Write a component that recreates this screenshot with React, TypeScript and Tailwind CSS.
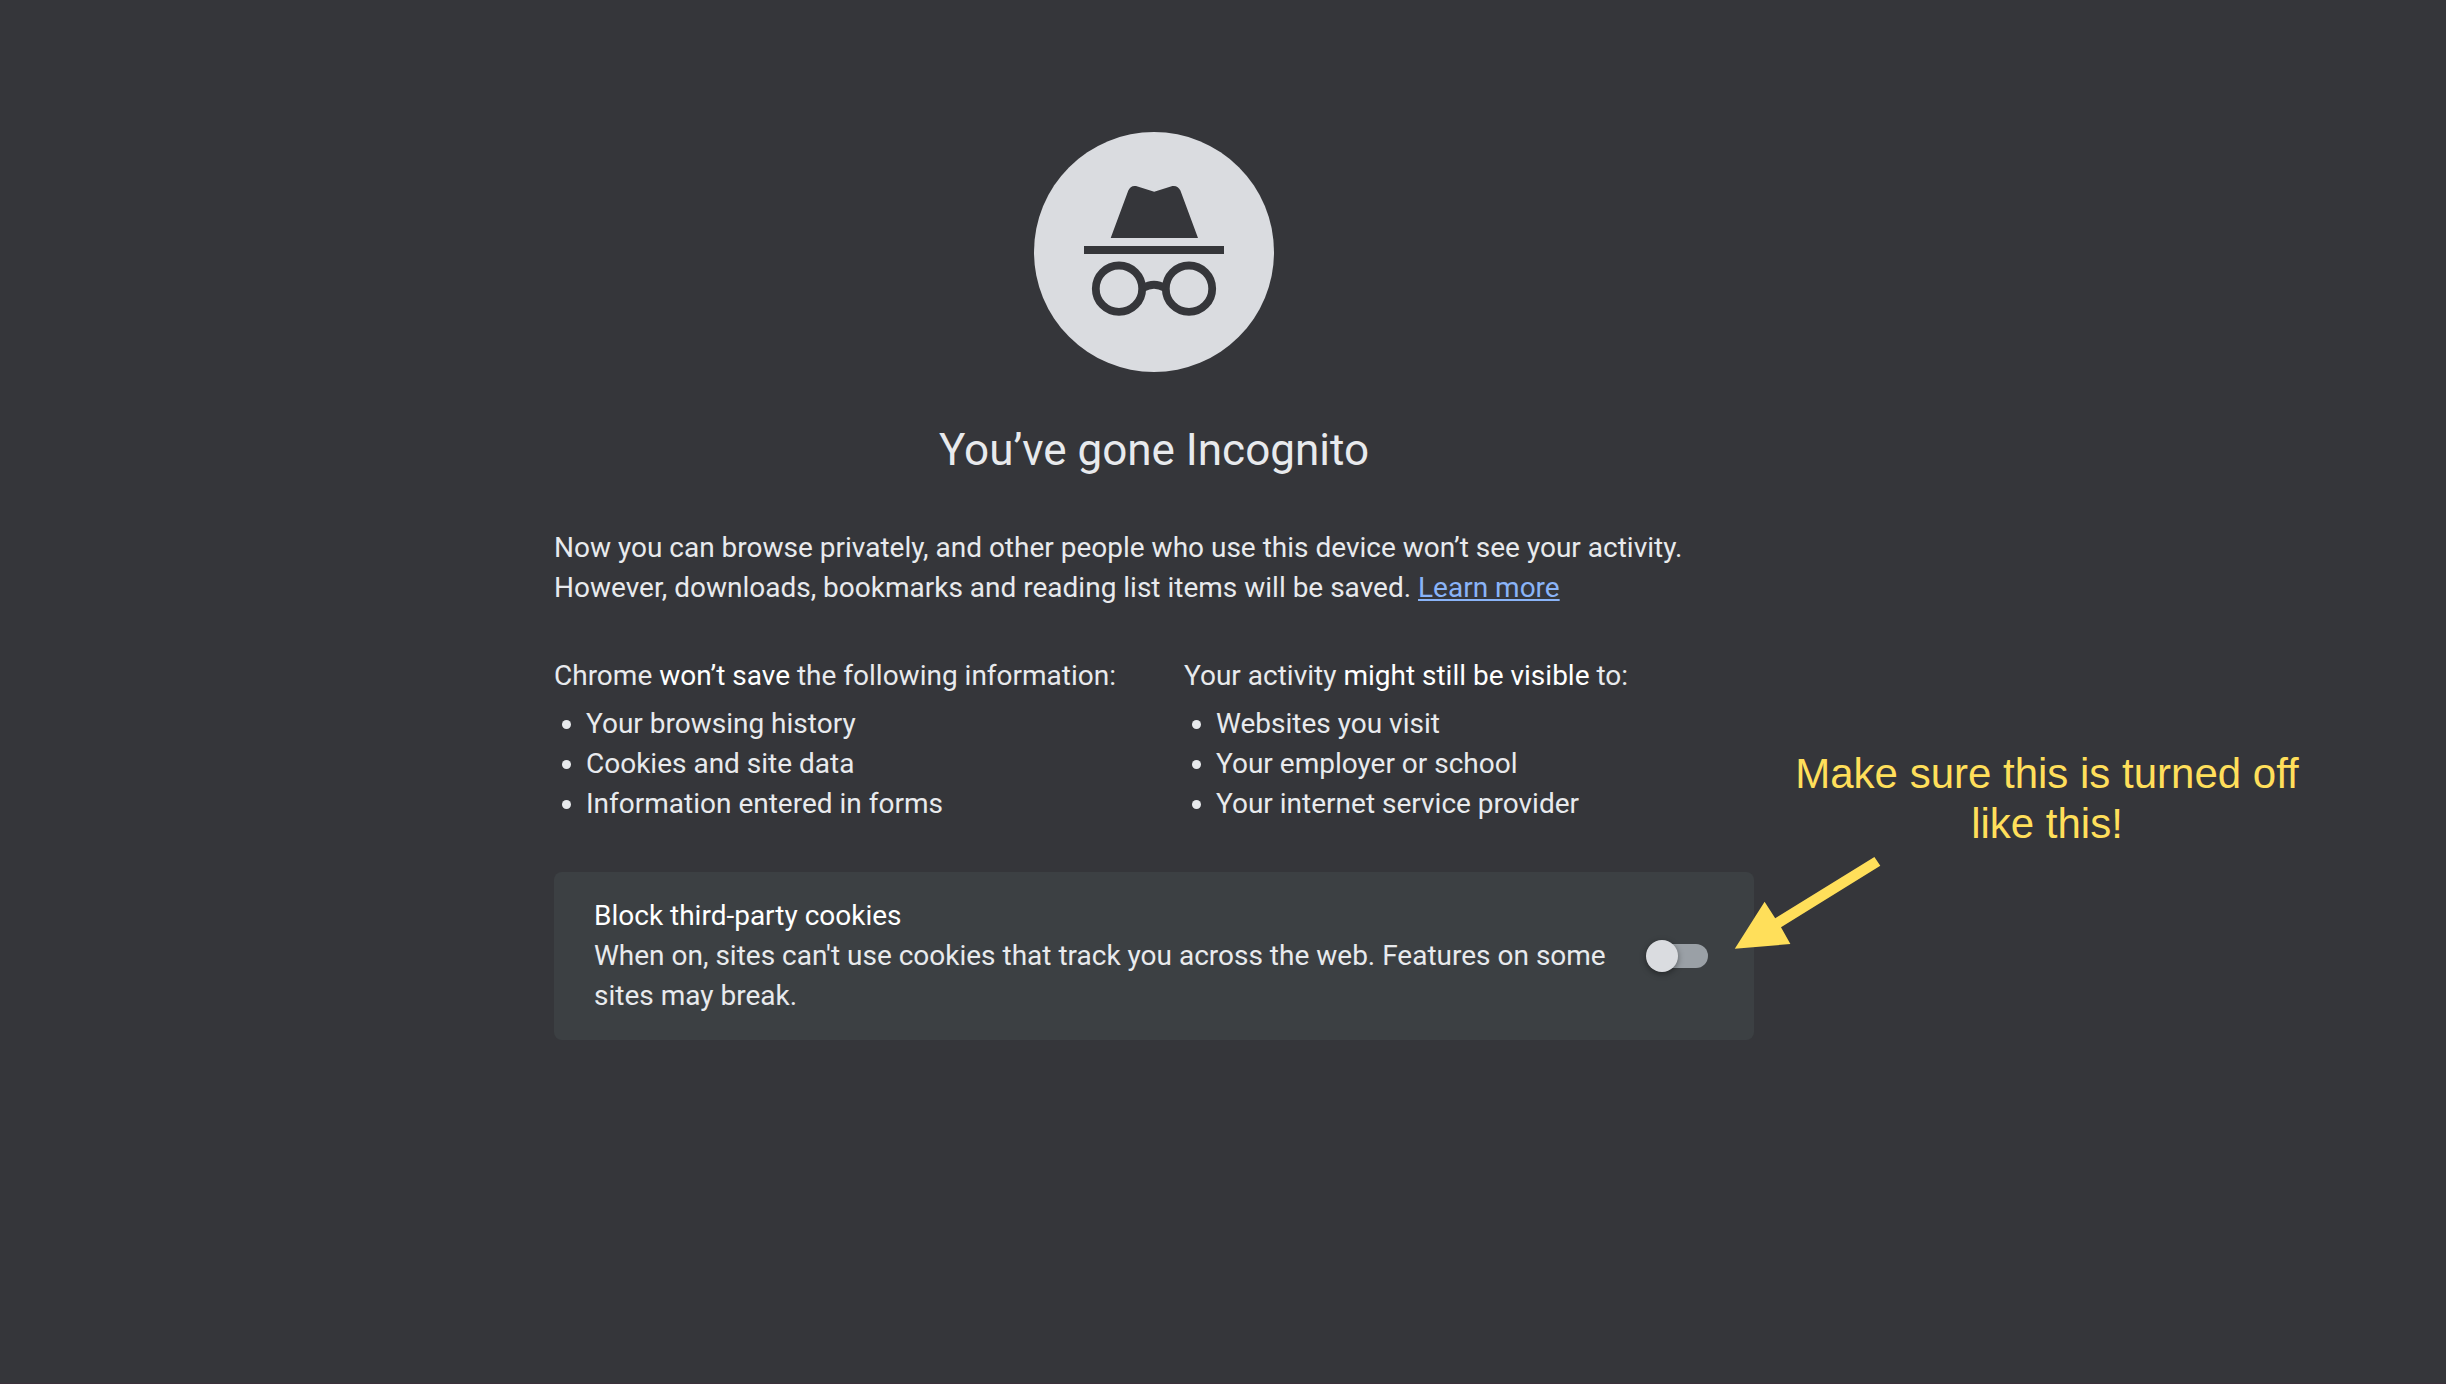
import { useState } from "react";

const notSaved = ["Your browsing history", "Cookies and site data", "Information entered in forms"];
const stillVisible = ["Websites you visit", "Your employer or school", "Your internet service provider"];

function IncognitoIcon() {
  return (
    <svg className="size-60" viewBox="0 0 240 240" fill="none" aria-hidden="true">
      <circle cx="120" cy="120" r="120" fill="#dadce0" />
      <path
        d="M76.7 106 L94.3 58.6 Q96.4 53.2 102 54 L120.2 59.7 L138.4 54 Q144 53.2 146.4 58.6 L164 106 Z"
        fill="#35363a"
      />
      <rect x="50" y="114" width="140" height="8" fill="#35363a" />
      <g stroke="#35363a" strokeWidth="7.8">
        <circle cx="85" cy="156.7" r="23.2" />
        <circle cx="155" cy="156.7" r="23.2" />
        <path d="M109 156 Q120 149.5 131 156" />
      </g>
    </svg>
  );
}

function InfoList({ items }: { items: string[] }) {
  return (
    <ul className="mt-2 list-disc pl-8">
      {items.map((item) => (
        <li key={item}>{item}</li>
      ))}
    </ul>
  );
}

function CookieControls() {
  const [blocked, setBlocked] = useState(false);
  return (
    <div className="flex items-center gap-9 rounded-lg bg-[#3c4043] px-10 py-6">
      <div className="flex-1">
        <label htmlFor="block-cookies" className="block text-white">
          Block third-party cookies
        </label>
        <p id="block-cookies-hint">
          When on, sites can't use cookies that track you across the web. Features on some sites may break.
        </p>
      </div>
      <span className="relative flex h-8 w-[68px] shrink-0 items-center px-[6px]">
        <input
          id="block-cookies"
          type="checkbox"
          role="switch"
          aria-describedby="block-cookies-hint"
          checked={blocked}
          onChange={(e) => setBlocked(e.target.checked)}
          className="peer h-6 w-full cursor-pointer appearance-none rounded-full bg-[#9aa0a6] checked:bg-[#5f7fae]"
        />
        <span className="pointer-events-none absolute left-0 size-8 rounded-full bg-[#dadce0] shadow-[0_2px_6px_rgba(0,0,0,0.4)] peer-checked:left-9 peer-checked:bg-[#8ab4f8]" />
      </span>
    </div>
  );
}

function Callout() {
  return (
    <aside className="pointer-events-none absolute -top-[123px] left-full w-[586px] text-center font-['Liberation_Sans',Helvetica,Arial,sans-serif] text-[42px] leading-[50px] text-[#ffdf5a]">
      <p>
        Make sure this is turned off
        <br />
        like this!
      </p>
      <svg className="absolute top-[108px] -left-5 h-[92px] w-[147px]" viewBox="0 0 147 92" aria-hidden="true">
        <path d="M140.4 0 L146.3 8.7 L47 70.3 L56.4 87 L0.8 91.7 L30.6 44.7 L41.2 61.3 Z" fill="#ffdf5a" />
      </svg>
    </aside>
  );
}

export default function App() {
  return (
    <div className="min-h-screen overflow-x-hidden border-b border-[#3b303a] bg-[#35363a] pr-[138px] font-[Roboto,sans-serif] text-[28px] leading-10 text-[#e8eaed]">
      <main className="mx-auto max-w-[1200px] pt-[132px] pb-16">
        <header className="flex flex-col items-center">
          <IncognitoIcon />
          <h1 className="mt-12 text-[44px] leading-[60px]">You’ve gone Incognito</h1>
        </header>
        <p className="mt-12">
          Now you can browse privately, and other people who use this device won’t see your activity.
          <br />
          However, downloads, bookmarks and reading list items will be saved.{" "}
          <a href="#learn-more" className="text-[#8ab4f8] underline">
            Learn more
          </a>
        </p>
        <div className="mt-12 flex gap-[68px]">
          <section>
            <p>
              Chrome <em className="text-white not-italic">won’t save</em> the following information:
            </p>
            <InfoList items={notSaved} />
          </section>
          <section>
            <p>
              Your activity <em className="text-white not-italic">might still be visible</em> to:
            </p>
            <InfoList items={stillVisible} />
          </section>
        </div>
        <div className="relative mt-12">
          <CookieControls />
          <Callout />
        </div>
      </main>
    </div>
  );
}
